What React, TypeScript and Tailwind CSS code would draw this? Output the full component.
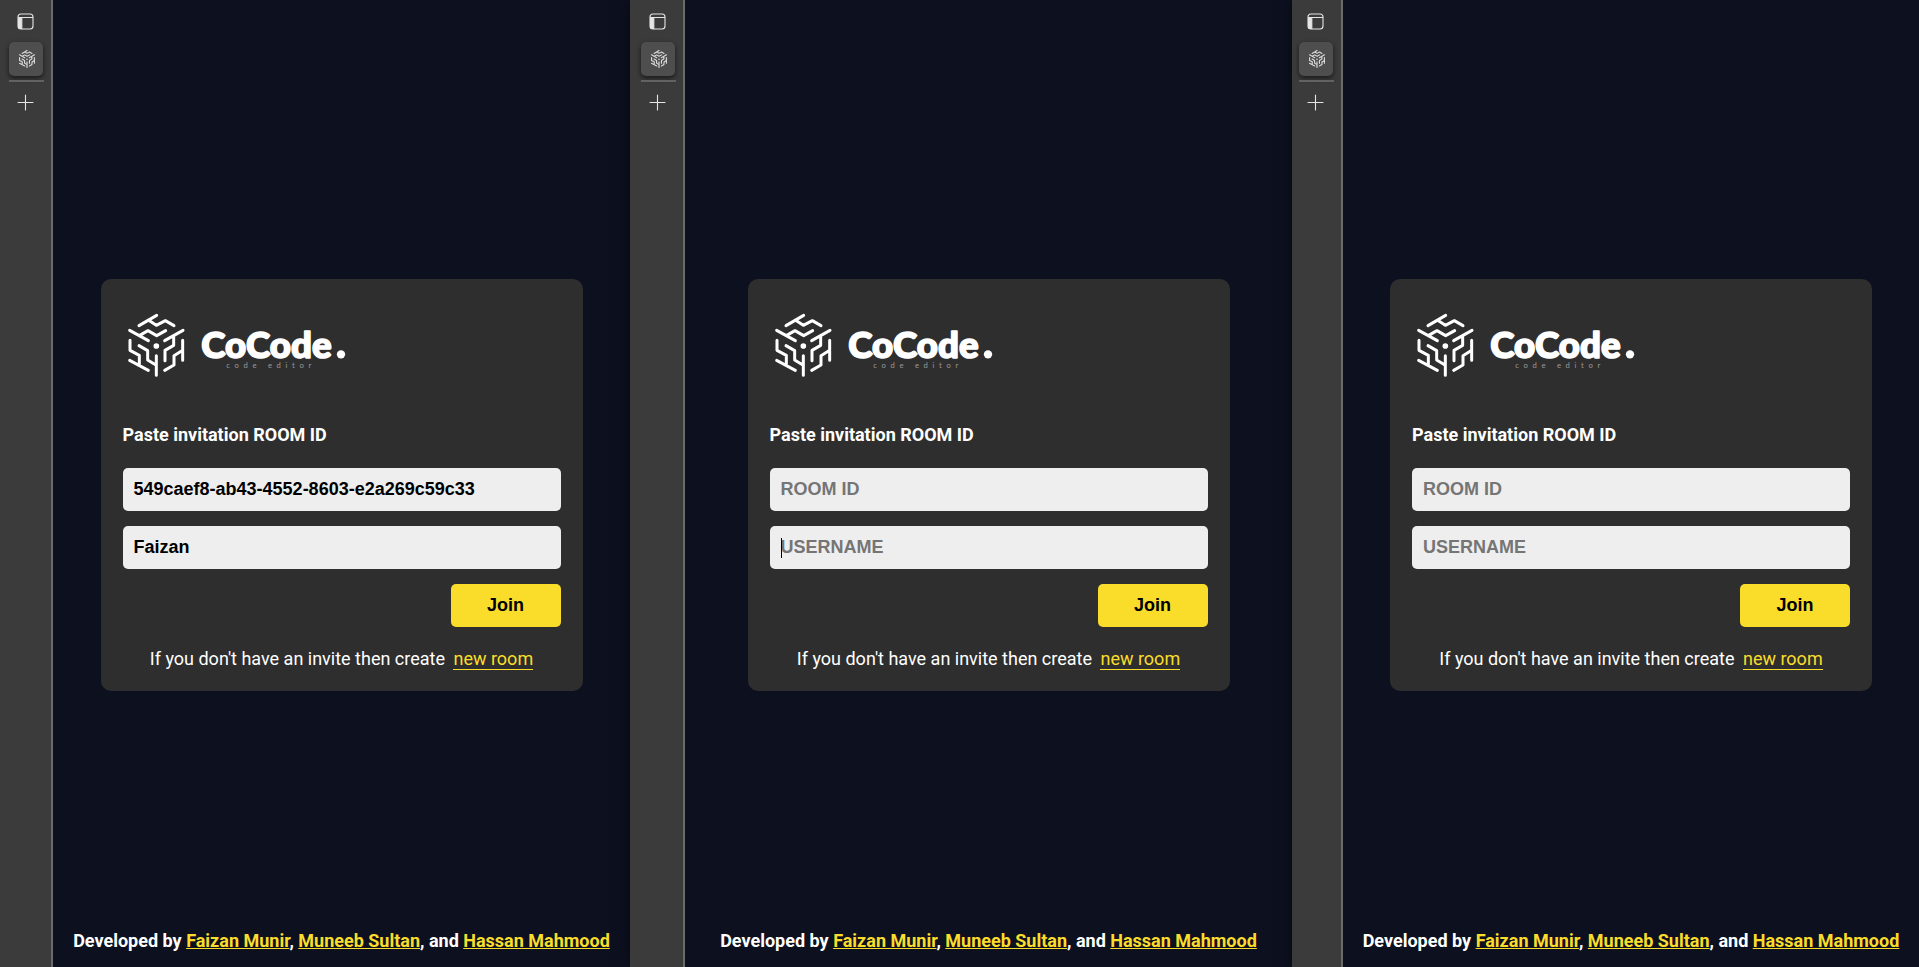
import React from "react";

type PanelProps = {
  id: string;
  railClass: string;
  roomId?: string;
  username?: string;
  caret?: boolean;
};

const cubeStrokes =
  "M72 77 125 46M101 61 124 76 151 62 177 77M44 91 100 122M74 106 99 92 125 107 152 92M204 91 149 122M176 108V136L150 151V182M203 121V181M203 151 177 167V195L149 211M45 121V151L73 166V195M44 181 100 211M72 137 98 152V180L124 196M124 167V226";

function CubeMark({ weight }: { weight: number }) {
  return (
    <g>
      <path d={cubeStrokes} fill="none" stroke="currentColor" strokeWidth={weight} strokeLinecap="round" strokeLinejoin="round" />
      <circle cx="124" cy="138" r="8.5" fill="currentColor" />
    </g>
  );
}

function Logo() {
  return (
    <svg viewBox="24 3 696 264" className="block h-[88px] w-[232px] text-white" role="img" aria-label="CoCode code editor">
      <CubeMark weight={9} />
      <text
        x="259"
        y="174"
        fontSize="110"
        strokeWidth="5"
        strokeLinejoin="round"
        className="fill-white stroke-white font-['Lato',sans-serif] font-black"
      >
        CoCode
      </text>
      <circle cx="678" cy="163" r="12.5" fill="currentColor" />
      <text x="334" y="203" fontSize="23" className="fill-[#9a9a9a] font-['Lato',sans-serif] tracking-[14px]">
        code editor
      </text>
    </svg>
  );
}

function Rail({ className }: { className: string }) {
  return (
    <nav
      aria-label="Tabs"
      className={`flex shrink-0 flex-col items-end border-r-2 border-[#6b6b6b] bg-[#3b3b3b] pr-2 pt-[13px] text-[#e4e6e6] ${className}`}
    >
      <button type="button" aria-label="Tab actions" className="mr-[9px]">
        <svg viewBox="0 0 17 17" className="block size-[17px]">
          <rect x="1" y="1" width="15" height="15" rx="3" fill="none" stroke="currentColor" strokeWidth="1.1" />
          <path d="M1 4.5h15M4.8 4.5V16" stroke="currentColor" strokeWidth="1.1" />
          <path d="M1 4.5h3.8V16H3.5A2.5 2.5 0 0 1 1 13.5Z" fill="currentColor" />
        </svg>
      </button>
      <button
        type="button"
        aria-label="CoCode tab"
        className="mt-3 flex h-[34px] w-[34px] items-center justify-end rounded-[5px] bg-[#4e4e4e] pr-[7px] text-[#dcdcdc] shadow-[0_2px_5px_rgba(0,0,0,0.6)]"
      >
        <svg viewBox="30 40 188 192" className="block size-[18px]">
          <CubeMark weight={12} />
        </svg>
      </button>
      <div className="-mr-px mt-1 h-0.5 w-[35px] bg-[#626262]" />
      <button type="button" aria-label="New tab" className="mr-[9px] mt-3">
        <svg viewBox="0 0 17 17" className="block size-[17px]">
          <path d="M8.5 1v15M1 8.5h15" stroke="currentColor" strokeWidth="1.1" strokeLinecap="round" />
        </svg>
      </button>
    </nav>
  );
}

const fieldClass =
  "block h-[43px] w-full rounded-[5px] bg-[#eeeeee] px-[11px] font-['Liberation_Sans',sans-serif] text-[18px] font-bold text-black outline-none placeholder:text-[#757575] placeholder:opacity-100";
const creditClass = "text-[#fadd2b] underline";

function Panel({ id, railClass, roomId = "", username = "", caret = false }: PanelProps) {
  return (
    <section className="relative flex min-w-0 bg-[#0d101f] shadow-[0_0_14px_rgba(0,0,0,0.5)]">
      <Rail className={railClass} />
      <main className="grid min-w-0 flex-1 grid-rows-[1fr_auto_1fr] justify-items-center pt-[3px] text-[18px]">
        <form
          onSubmit={(e) => e.preventDefault()}
          className="row-start-2 w-[482px] max-w-full rounded-[10px] bg-[#2e2e2e] p-[22px]"
        >
          <Logo />
          <label htmlFor={`${id}-room`} className="mb-5 mt-8 block font-bold leading-[27px]">
            Paste invitation ROOM ID
          </label>
          <div className="flex flex-col gap-[15px]">
            <input id={`${id}-room`} type="text" defaultValue={roomId} placeholder="ROOM ID" className={fieldClass} />
            <div className="relative">
              <input
                type="text"
                aria-label="Username"
                defaultValue={username}
                placeholder="USERNAME"
                className={fieldClass}
              />
              {caret && <span className="absolute left-[11px] top-3 h-5 w-px bg-black" />}
            </div>
            <button
              type="submit"
              className="h-[43px] w-[110px] self-end rounded-[5px] bg-[#fadd2b] font-['Liberation_Sans',sans-serif] font-bold text-black"
            >
              Join
            </button>
          </div>
          <p className="mt-[21px] text-center leading-[21px]">
            If you don't have an invite then create{" "}
            <a href="#new-room" className="ml-1 border-b border-[#fadd2b] text-[#fadd2b]">new room</a>
          </p>
        </form>
        <footer className="row-start-3 self-end pb-4 font-bold leading-[21px]">
          Developed by <a href="#faizan" className={creditClass}>Faizan Munir</a>,{" "}
          <a href="#muneeb" className={creditClass}>Muneeb Sultan</a>, and{" "}
          <a href="#hassan" className={creditClass}>Hassan Mahmood</a>
        </footer>
      </main>
    </section>
  );
}

export default function App() {
  return (
    <div className="grid min-h-screen grid-cols-[minmax(0,630fr)_minmax(0,662fr)_minmax(0,627fr)] overflow-hidden bg-[#0d101f] font-['Roboto',sans-serif] text-white">
      <Panel id="first" railClass="w-[53px]" roomId="549caef8-ab43-4552-8603-e2a269c59c33" username="Faizan" />
      <Panel id="second" railClass="w-[55px]" caret />
      <Panel id="third" railClass="w-[51px]" />
    </div>
  );
}
